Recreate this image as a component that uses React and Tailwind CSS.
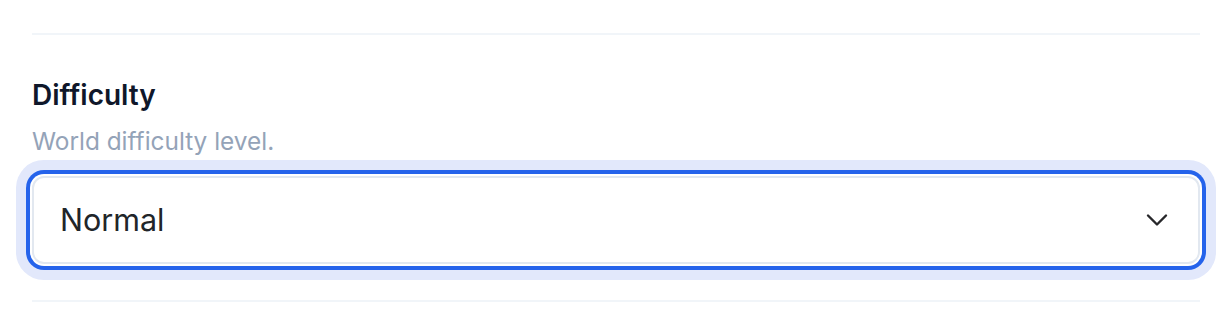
export default function App() {
  return (
    <div className="min-h-screen bg-white px-8 pt-[33px]" style={{ fontFamily: 'Inter, "Noto Sans", sans-serif' }}>
      <div className="h-[2px] bg-[#f1f5f9]" />

      <div className="pt-[42px]">
        <h2 className="text-[28px] font-semibold leading-[36px] text-[#0f172a]">Difficulty</h2>
        <p className="mt-[12px] text-[24.4px] leading-[32px] text-[#94a3b8]">World difficulty level.</p>

        <div className="mt-[19px] flex h-[88px] items-center justify-between rounded-[12px] border-2 border-[#e2e8f0] bg-white pl-[26px] pr-[30px] shadow-[0_0_0_2px_#fff,0_0_0_6px_#2563eb,0_0_0_16px_#e2e8fb]">
          <span className="text-[30.5px] leading-none text-[#212529]">Normal</span>
          <svg width="22" height="14" viewBox="0 0 22 14" fill="none" stroke="#27272a" strokeWidth="2.4" strokeLinecap="round" strokeLinejoin="round">
            <path d="M2 2.5l9 9 9-9" />
          </svg>
        </div>
      </div>

      <div className="mt-[36px] h-[2px] bg-[#f1f5f9]" />
    </div>
  )
}
